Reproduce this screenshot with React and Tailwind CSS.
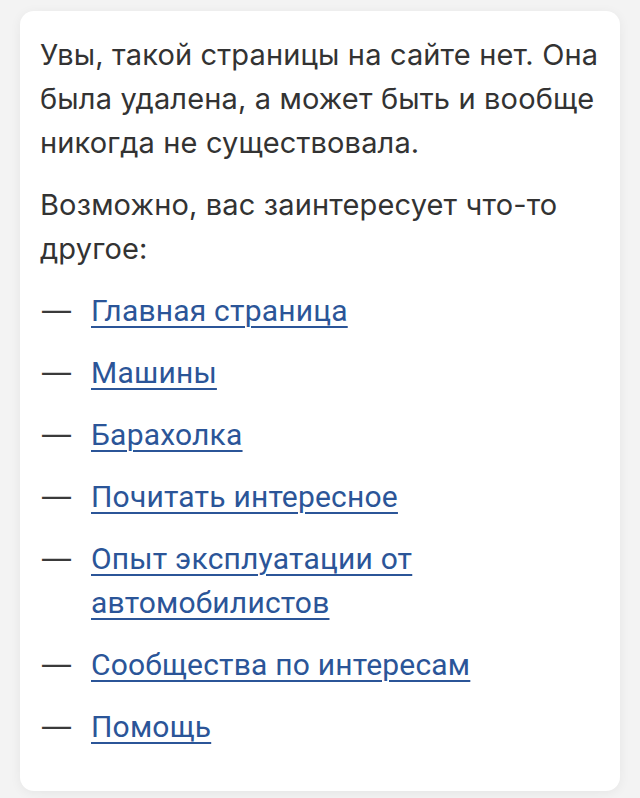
import React from 'react';

const links = [
  'Главная страница',
  'Машины',
  'Барахолка',
  'Почитать интересное',
  'Опыт эксплуатации от автомобилистов',
  'Сообщества по интересам',
  'Помощь',
];

export default function App() {
  return (
    <div className="min-h-[798px] bg-[#f3f3f3] px-5 pt-[11px] pb-2" style={{ fontFamily: 'Inter, "Noto Sans", sans-serif' }}>
      <div className="bg-white rounded-[14px] shadow-[0_2px_12px_rgba(0,0,0,0.06)] px-5 pt-[22px] pb-[42px] text-[29px] leading-[44px] text-[#333] tracking-[0.15px]">
        <p>Увы, такой страницы на сайте нет. Она была удалена, а может быть и вообще никогда не существовала.</p>
        <p className="mt-[18px]">Возможно, вас заинтересует что-то другое:</p>
        <ul className="mt-[18px] flex flex-col gap-[18px]">
          {links.map((label) => (
            <li key={label} className="flex">
              <span className="w-[51px] pl-[2px] shrink-0 text-[#3a3a3a]">—</span>
              <a href="#" className="text-[#2b5598] underline underline-offset-[5px] decoration-[1.5px] font-['Roboto'] text-[30px] tracking-[0.2px]">
                {label}
              </a>
            </li>
          ))}
        </ul>
      </div>
    </div>
  );
}
